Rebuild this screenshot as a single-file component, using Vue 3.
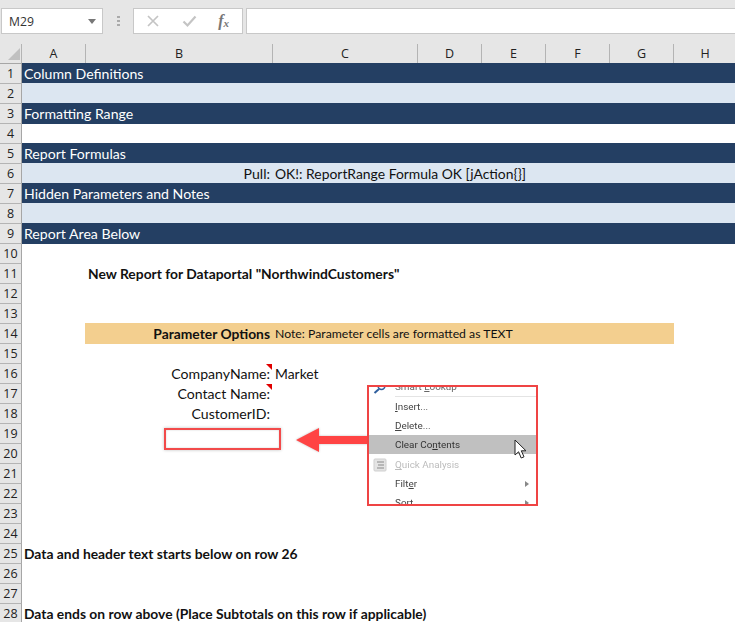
<template>
  <div class="app">
    <div class="formula-bar">
      <div class="name-box">
        <span>M29</span>
        <i class="caret"></i>
      </div>
      <div class="grip"><i></i><i></i><i></i></div>
      <div class="fx-group">
        <svg width="14" height="14" viewBox="0 0 14 14"><path d="M2 2l10 10M12 2L2 12" stroke="#c4c4c4" stroke-width="1.7" fill="none" /></svg>
        <svg width="15" height="14" viewBox="0 0 15 14"><path d="M1.5 7.5l4 4 8-9" stroke="#c4c4c4" stroke-width="2.2" fill="none" /></svg>
        <span class="fx">f<sub>x</sub></span>
      </div>
      <div class="formula-input"></div>
    </div>

    <div class="col-head">
      <div class="corner"><i></i></div>
      <div v-for="c in columns" :key="c" class="col-label">{{ c }}</div>
    </div>

    <div class="sheet">
      <div class="row-nums">
        <div v-for="n in 28" :key="n" class="row-num">{{ n }}</div>
      </div>
      <div class="rows">
        <div v-for="(r, i) in rows" :key="i" class="row" :class="r.kind">
          <span v-if="r.a" class="cell-a" :class="{ bold: r.bold }">{{ r.a }}</span>
          <span v-if="r.title" class="cell-title">{{ r.title }}</span>
          <span v-if="r.b" class="cell-b" :class="{ bold: r.bold }">{{ r.b }}</span>
          <span v-if="r.c" class="cell-c" :class="{ small: r.small }">{{ r.c }}</span>
          <i v-if="r.note" class="comment-mark"></i>
        </div>
      </div>
    </div>

    <div class="cell-callout"></div>
    <div class="arrow">
      <svg width="74" height="26" viewBox="0 0 74 26"><path d="M1 13L24 1v8h50v8H24v8z" fill="#ff4444" /></svg>
    </div>

    <div class="menu">
      <div class="menu-item lookup">
        <svg class="menu-icon" width="14" height="12" viewBox="0 0 14 12"><circle cx="8.5" cy="4" r="3.4" fill="none" stroke="#2f5f9e" stroke-width="1.5" /><path d="M6 7L1.5 11" stroke="#2f5f9e" stroke-width="2" /></svg>
        <span>Smart <u>L</u>ookup</span>
      </div>
      <div class="menu-sep"></div>
      <div class="menu-item"><span><u>I</u>nsert...</span></div>
      <div class="menu-item"><span><u>D</u>elete...</span></div>
      <div class="menu-item active"><span>Clear Co<u>n</u>tents</span></div>
      <div class="menu-item disabled">
        <svg class="menu-icon" width="14" height="14" viewBox="0 0 14 14"><rect x="1" y="1" width="12" height="12" rx="1" fill="#e4e4e4" stroke="#cfcfcf" /><path d="M4 4h7M5 7h6M4 10h7" stroke="#a8a8a8" stroke-width="1.4" /></svg>
        <span><u>Q</u>uick Analysis</span>
      </div>
      <div class="menu-item"><span>Filt<u>e</u>r</span><i class="sub"></i></div>
      <div class="menu-item"><span>S<u>o</u>rt</span><i class="sub"></i></div>
    </div>

    <svg class="pointer" width="14" height="21" viewBox="0 0 14 21">
      <path d="M1 1v15l3.6-3.2 2.6 6.2 2.8-1.2-2.7-6h4.7z" fill="#fff" stroke="#222" stroke-width="1" />
    </svg>
  </div>
</template>

<script setup>
const columns = ["A", "B", "C", "D", "E", "F", "G", "H"];

const rows = [
  { kind: "dark", title: "Column Definitions" },
  { kind: "light" },
  { kind: "dark extend", title: "Formatting Range" },
  {},
  { kind: "dark", title: "Report Formulas" },
  { kind: "light", b: "Pull:", c: "OK!: ReportRange Formula OK [jAction{}]" },
  { kind: "dark", title: "Hidden Parameters and Notes" },
  { kind: "light" },
  { kind: "dark extend", title: "Report Area Below" },
  {},
  { a: 'New Report for Dataportal "NorthwindCustomers"', bold: true },
  {},
  {},
  { kind: "band", b: "Parameter Options", bold: true, c: "Note: Parameter cells are formatted as TEXT", small: true },
  {},
  { b: "CompanyName:", c: "Market", note: true },
  { b: "Contact Name:", note: true },
  { b: "CustomerID:" },
  {},
  {},
  {},
  {},
  {},
  {},
  { kind: "sheet-note", title: "Data and header text starts below on row 26" },
  {},
  {},
  { kind: "sheet-note", title: "Data ends on row above (Place Subtotals on this row if applicable)" },
];
</script>

<style>
html,
body {
  margin: 0;
  background: #fff;
}
</style>

<style scoped>
.app {
  position: relative;
  width: 735px;
  height: 622px;
  overflow: hidden;
  background: #fff;
  font-family: Lato, "Liberation Sans", sans-serif;
  font-size: 14.1px;
  color: #111;
}

.formula-bar {
  display: flex;
  height: 44px;
  padding: 8px 0 0 1px;
  box-sizing: border-box;
  background: #e6e6e6;
  font-family: "Open Sans", sans-serif;
}

.name-box,
.fx-group,
.formula-input {
  height: 26px;
  box-sizing: border-box;
  background: #fff;
  border: 1px solid #c8c8c8;
}

.name-box {
  display: flex;
  align-items: center;
  justify-content: space-between;
  width: 102px;
  padding: 0 6px 0 7px;
  font-size: 12.2px;
  color: #333;
}

.caret {
  width: 0;
  height: 0;
  border-left: 4px solid transparent;
  border-right: 4px solid transparent;
  border-top: 5px solid #777;
}

.grip {
  display: flex;
  flex-direction: column;
  align-items: center;
  justify-content: center;
  gap: 2px;
  width: 30px;
  height: 26px;
}

.grip i {
  width: 3px;
  height: 2px;
  background: #aaa;
}

.fx-group {
  display: flex;
  align-items: center;
  justify-content: space-between;
  width: 110px;
  margin-right: 3px;
  padding: 0 13px 0 12px;
}

.fx {
  font-family: "Liberation Serif", serif;
  font-style: italic;
  font-weight: bold;
  font-size: 16px;
  color: #777;
}

.fx sub {
  font-size: 11px;
  vertical-align: -1px;
  line-height: 0;
}

.formula-input {
  flex: 1;
  border-right: 0;
}

.col-head {
  display: grid;
  grid-template-columns: 22px 64px 187px 145px 64px 64px 64px 64px 62px;
  height: 20px;
  box-sizing: border-box;
  background: #e6e6e6;
  border-bottom: 1px solid #a6a6a6;
  font-family: "Open Sans", sans-serif;
  font-size: 12.5px;
  color: #222;
}

.corner {
  display: flex;
  align-items: flex-end;
  justify-content: flex-end;
  border-right: 1px solid #b4b4b4;
}

.corner i {
  width: 0;
  height: 0;
  margin: 0 1px 3px 0;
  border-left: 12px solid transparent;
  border-bottom: 12px solid #c0c0c0;
}

.col-label {
  line-height: 19px;
  text-align: center;
  border-right: 1px solid #b4b4b4;
}

.col-label:last-child {
  border-right: 0;
}

.sheet {
  display: flex;
  margin-top: -1px;
}

.row-nums {
  flex: 0 0 22px;
  padding-top: 1px;
  font-family: "Open Sans", sans-serif;
  font-size: 12.5px;
  color: #222;
}

.row-num {
  height: 20px;
  box-sizing: border-box;
  line-height: 20px;
  text-align: center;
  background: #e6e6e6;
  border-bottom: 1px solid #b4b4b4;
  border-right: 1px solid #a6a6a6;
}

.rows {
  flex: 1;
  min-width: 0;
}

.row {
  position: relative;
  display: grid;
  grid-template-columns: 64px 187px 145px 257px;
  height: 20px;
  line-height: 22px;
  white-space: nowrap;
}

.dark {
  background: #243f63;
  color: #fff;
}

.light {
  background: #dce6f1;
}

.extend {
  box-shadow: 0 1px 0 #243f63;
  z-index: 1;
}

.band {
  height: 21px;
  margin-bottom: -1px;
  background: linear-gradient(#f3cf8f, #f3cf8f) no-repeat 63px 0 / 589px 100%;
}

.cell-title {
  grid-column: 1 / -1;
  padding-left: 2px;
}

.sheet-note {
  font-size: 13.85px;
  font-weight: 700;
}

.cell-a {
  grid-column: 2 / -1;
  padding-left: 2px;
}

.cell-b {
  grid-column: 2;
  padding-right: 3px;
  text-align: right;
}

.cell-c {
  grid-column: 3 / -1;
  padding-left: 2px;
  font-size: 13.9px;
}

.bold {
  font-size: 13.85px;
  font-weight: 700;
}

.small {
  font-size: 12.25px;
}

.comment-mark {
  position: absolute;
  left: 244px;
  top: 1px;
  width: 0;
  height: 0;
  border-left: 6px solid transparent;
  border-top: 6px solid #e00000;
}

.cell-callout {
  position: absolute;
  left: 164px;
  top: 428px;
  width: 117px;
  height: 22px;
  box-sizing: border-box;
  border: 2px solid #f24a4a;
  box-shadow: 0 0 3px rgba(0, 0, 0, 0.25), inset 0 0 2px rgba(0, 0, 0, 0.2);
}

.arrow {
  position: absolute;
  left: 295px;
  top: 427px;
  height: 26px;
  filter: drop-shadow(0 0 1px rgba(0, 0, 0, 0.25));
}

.menu {
  position: absolute;
  left: 367px;
  top: 385px;
  width: 171px;
  height: 121px;
  box-sizing: border-box;
  overflow: hidden;
  background: #fff;
  border: 2px solid #ef4444;
  font-family: Roboto, "Open Sans", sans-serif;
  font-size: 9.9px;
  color: #444;
}

.menu span {
  filter: blur(0.3px);
}

.menu-item {
  position: relative;
  display: flex;
  align-items: center;
  height: 19px;
  padding-left: 26px;
}

.lookup {
  height: 12px;
  margin-top: -7px;
  color: #666;
}

.menu-icon {
  position: absolute;
  left: 4px;
}

.lookup .menu-icon {
  top: 2px;
}

.menu-sep {
  height: 1px;
  margin: 4px 0 0 26px;
  background: #e4e4e4;
}

.active {
  background: #c0c0c0;
  color: #333;
}

.disabled {
  margin-top: 1px;
  color: #bcbcbc;
}

.sub {
  position: absolute;
  right: 7px;
  width: 0;
  height: 0;
  border-top: 3px solid transparent;
  border-bottom: 3px solid transparent;
  border-left: 4px solid #888;
}

.pointer {
  position: absolute;
  left: 514px;
  top: 439px;
}
</style>
